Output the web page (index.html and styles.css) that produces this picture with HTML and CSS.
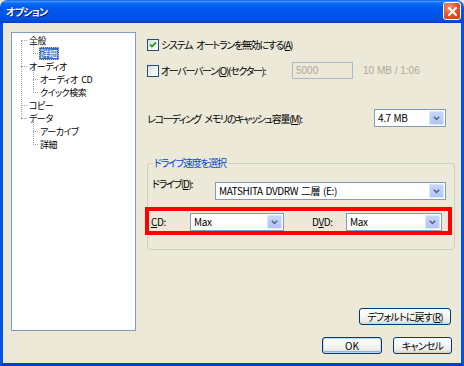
FILE: index.html
```html
<!DOCTYPE html>
<html lang="ja">
<head>
<meta charset="utf-8">
<link rel="stylesheet" href="styles.css">
</head>
<body>
<div class="window">
  <div class="titlebar">
    <span class="title">オプション</span>
    <span class="close"><svg width="9" height="9" viewBox="0 0 9 9"><path d="M1 1L8 8M8 1L1 8" stroke="#fff" stroke-width="2" stroke-linecap="square"/></svg></span>
  </div>
  <div class="content">
    <div class="main">
      <div class="tree">
        <ul class="tlist root">
          <li><span class="lbl">全般</span>
            <ul class="tlist child"><li><span class="lbl sel">詳細</span></li></ul>
          </li>
          <li><span class="lbl">オーディオ</span>
            <ul class="tlist child"><li><span class="lbl">オーディオ CD</span></li><li><span class="lbl">クイック検索</span></li></ul>
          </li>
          <li><span class="lbl">コピー</span></li>
          <li><span class="lbl">データ</span>
            <ul class="tlist child"><li><span class="lbl">アーカイブ</span></li><li><span class="lbl">詳細</span></li></ul>
          </li>
        </ul>
      </div>
      <div class="right">
        <div class="row row-auto">
          <span class="cb"><svg width="8" height="8" viewBox="0 0 8 8"><path d="M1 3.5L3 5.5L7 1.5" fill="none" stroke="#21A121" stroke-width="1.8"/></svg></span>
          <span class="txt">システム オートランを無効にする(<u>A</u>)</span>
        </div>
        <div class="row row-over">
          <div class="over-label">
            <span class="cb"></span>
            <span class="txt">オーバーバーン(<u>O</u>)(セクター):</span>
          </div>
          <span class="edit">5000</span>
          <span class="dim">10 MB / 1:06</span>
        </div>
        <div class="row row-cache">
          <span class="txt">レコーディング メモリのキャッシュ容量(<u>M</u>):</span>
          <span class="combo combo-cache"><span class="val">4.7 MB</span><span class="drop"><svg width="7" height="5" viewBox="0 0 7 5"><path d="M0.8 0.8L3.5 3.5L6.2 0.8" fill="none" stroke="#4D6185" stroke-width="1.5"/></svg></span></span>
        </div>
        <fieldset class="group">
          <legend>ドライブ速度を選択</legend>
          <div class="row row-drive">
            <span class="txt drive-label">ドライブ(<u>D</u>):</span>
            <span class="combo combo-drive"><span class="val">MATSHITA DVDRW 二層 (E:)</span><span class="drop"><svg width="7" height="5" viewBox="0 0 7 5"><path d="M0.8 0.8L3.5 3.5L6.2 0.8" fill="none" stroke="#4D6185" stroke-width="1.5"/></svg></span></span>
          </div>
          <div class="redbox">
            <span class="txt lab-cd"><u>C</u>D:</span>
            <span class="combo combo-cd"><span class="val">Max</span><span class="drop"><svg width="7" height="5" viewBox="0 0 7 5"><path d="M0.8 0.8L3.5 3.5L6.2 0.8" fill="none" stroke="#4D6185" stroke-width="1.5"/></svg></span></span>
            <span class="txt lab-dvd">D<u>V</u>D:</span>
            <span class="combo combo-dvd"><span class="val">Max</span><span class="drop"><svg width="7" height="5" viewBox="0 0 7 5"><path d="M0.8 0.8L3.5 3.5L6.2 0.8" fill="none" stroke="#4D6185" stroke-width="1.5"/></svg></span></span>
          </div>
        </fieldset>
        <button class="btn btn-default">デフォルトに戻す(<u>R</u>)</button>
      </div>
    </div>
    <div class="buttons">
      <button class="btn btn-ok">OK</button>
      <button class="btn btn-cancel">キャンセル</button>
    </div>
  </div>
</div>
</body>
</html>
```
FILE: styles.css
```css
html, body {
  margin: 0;
  padding: 0;
  background: #ECE9D8;
}
body {
  font-family: "Noto Sans CJK JP", "Liberation Sans", sans-serif;
  font-size: 10px;
  font-feature-settings: "palt";
  letter-spacing: -1.3px;
  word-spacing: 3px;
  color: #000;
}
.window {
  width: 464px;
  height: 366px;
  display: flex;
  flex-direction: column;
  box-sizing: border-box;
  background: #ECE9D8;
}
.titlebar {
  height: 23px;
  flex: 0 0 23px;
  display: flex;
  align-items: center;
  justify-content: space-between;
  padding: 0 3px 0 6px;
  border-radius: 7px 7px 0 0;
  background: linear-gradient(to bottom, #0A5FE6 0%, #3D95FF 6%, #0A6CF5 14%, #0058EE 35%, #0055EA 60%, #0050E3 85%, #0046D1 94%, #003DC2 100%);
  color: #fff;
}
.title {
  font-weight: bold;
  font-size: 10px;
  text-shadow: 1px 1px 0 #0A1883;
  letter-spacing: -0.8px;
}
.close {
  width: 16px;
  height: 16px;
  border: 1px solid #fff;
  border-radius: 3px;
  background: radial-gradient(circle at 35% 30%, #F39A79 0%, #E25A32 45%, #C93A12 100%);
  display: flex;
  align-items: center;
  justify-content: center;
  margin-top: -1px;
}
.content {
  flex: 1;
  display: flex;
  flex-direction: column;
  border-left: 3px solid #0553E6;
  border-right: 3px solid #0553E6;
  border-bottom: 3px solid #0340C9;
  padding: 9px 5px 0 8px;
  min-height: 0;
}
.main {
  display: flex;
  height: 299px;
}
.tree {
  width: 125px;
  flex: 0 0 125px;
  box-sizing: border-box;
  border: 1px solid #7F9DB9;
  background: #fff;
  padding-top: 1px;
  font-size: 9px;
  letter-spacing: -0.5px;
  word-spacing: 2px;
}
.tlist {
  list-style: none;
  margin: 0;
  padding: 0;
  position: relative;
}
.tlist li {
  position: relative;
  line-height: 13px;
}
.lbl {
  display: block;
  width: max-content;
  height: 13px;
  line-height: 13px;
  padding: 0 1px;
  white-space: nowrap;
  box-sizing: border-box;
}
.root > li > .lbl { margin-left: 16px; }
.child > li > .lbl { margin-left: 27px; }
.lbl.sel {
  background: #316AC5;
  color: #fff;
  outline: 1px dotted #F0C040;
  outline-offset: -1px;
  padding: 0 2px 0 1px;
}
.root > li::before,
.child > li::before {
  content: "";
  position: absolute;
  top: 6px;
  border-top: 1px dotted #A0A0A0;
}
.root > li::before { left: 9px; width: 6px; }
.child > li::before { left: 21px; width: 5px; }
.root::before {
  content: "";
  position: absolute;
  left: 9px;
  top: 6px;
  height: 78px;
  border-left: 1px dotted #A0A0A0;
}
.child::before {
  content: "";
  position: absolute;
  left: 21px;
  top: -6px;
  bottom: 6px;
  border-left: 1px dotted #A0A0A0;
}
.right {
  width: 310px;
  flex: 0 0 310px;
  margin-left: 10px;
  display: flex;
  flex-direction: column;
}
.row {
  display: flex;
  align-items: center;
}
.txt { white-space: nowrap; }
.cb {
  width: 12px;
  height: 12px;
  box-sizing: border-box;
  border: 1px solid #1C5180;
  background: linear-gradient(135deg, #DCDCD7 0%, #F4F4F1 60%, #FFFFFF 100%);
  display: inline-flex;
  align-items: center;
  justify-content: center;
  margin-right: 2px;
  flex: 0 0 12px;
}
.row-auto {
  margin-top: 6px;
  height: 13px;
  padding-left: 1px;
}
.row-over {
  margin-top: 11px;
  height: 17px;
  padding-left: 1px;
}
.over-label {
  width: 145px;
  display: flex;
  align-items: center;
}
.edit {
  width: 61px;
  height: 17px;
  box-sizing: border-box;
  border: 1px solid #A7B9D3;
  color: #ACA899;
  line-height: 15px;
  padding-left: 3px;
  font-family: "Liberation Sans", sans-serif;
  font-size: 10px;
  letter-spacing: 0;
  word-spacing: 0;
}
.dim {
  margin-left: 10px;
  color: #ACA899;
  font-family: "Liberation Sans", sans-serif;
  font-size: 10px;
  letter-spacing: 0;
  word-spacing: 0;
}
.row-cache {
  margin-top: 30px;
  justify-content: space-between;
  padding-left: 1px;
  padding-right: 10px;
}
.combo {
  display: flex;
  height: 18px;
  box-sizing: border-box;
  border: 1px solid #7F9DB9;
  background: #fff;
  letter-spacing: -0.4px;
  word-spacing: 1px;
}
.val {
  flex: 1;
  padding-left: 3px;
  line-height: 16px;
  white-space: nowrap;
  overflow: hidden;
}
.drop {
  width: 15px;
  margin: 1px;
  border-radius: 2px;
  background: linear-gradient(to bottom, #C8D6FB 0%, #B9CCF8 60%, #AFC4F4 100%);
  box-shadow: inset 0 0 0 1px #DCE6FD;
  display: flex;
  align-items: center;
  justify-content: center;
}
.combo-cache { width: 72px; }
.group {
  margin: 30px 0 0 1px;
  width: 308px;
  box-sizing: border-box;
  border: 1px solid #D0D0BF;
  border-radius: 3px;
  padding: 0 0 14px 0;
  min-width: 0;
}
.group legend {
  color: #0046D5;
  padding: 0 1px;
  margin-left: 5px;
  line-height: 12px;
  height: 12px;
}
.row-drive {
  margin-top: 8px;
  align-items: flex-start;
  padding-left: 4px;
}
.drive-label {
  width: 63px;
  line-height: 13px;
}
.combo-drive {
  width: 231px;
  margin-top: 5px;
}
.redbox {
  margin: 7px 0 0 -3px;
  width: 307px;
  height: 28px;
  box-sizing: border-box;
  border: 4px solid #FF0000;
  padding: 2px 0 0 2px;
  display: flex;
  align-items: flex-start;
}
.lab-cd { width: 39px; line-height: 18px; letter-spacing: -0.4px; }
.combo-cd { width: 94px; }
.lab-dvd { width: 34px; margin-left: 28px; line-height: 18px; letter-spacing: -0.4px; }
.combo-dvd { width: 96px; }
.btn {
  font-family: inherit;
  font-size: 10px;
  font-feature-settings: "palt";
  letter-spacing: -0.8px;
  color: #000;
  height: 17px;
  padding: 0;
  border: 1px solid #003C74;
  border-radius: 3px;
  background: linear-gradient(to bottom, #FFFFFF 0%, #F7F7F4 40%, #ECEBE6 80%, #D6D0C5 100%);
  line-height: 15px;
}
.btn-default {
  width: 92px;
  align-self: flex-end;
  margin-top: auto;
  margin-right: 5px;
  margin-bottom: 6px;
}
.buttons {
  display: flex;
  justify-content: flex-end;
  gap: 11px;
  margin-top: 6px;
  padding-right: 4px;
}
.btn-ok {
  width: 60px;
  letter-spacing: 0;
  box-shadow: inset 0 0 0 1px #C3D5FD, inset 0 -1px 0 1px #97AEE2;
}
.btn-cancel { width: 59px; }
```
